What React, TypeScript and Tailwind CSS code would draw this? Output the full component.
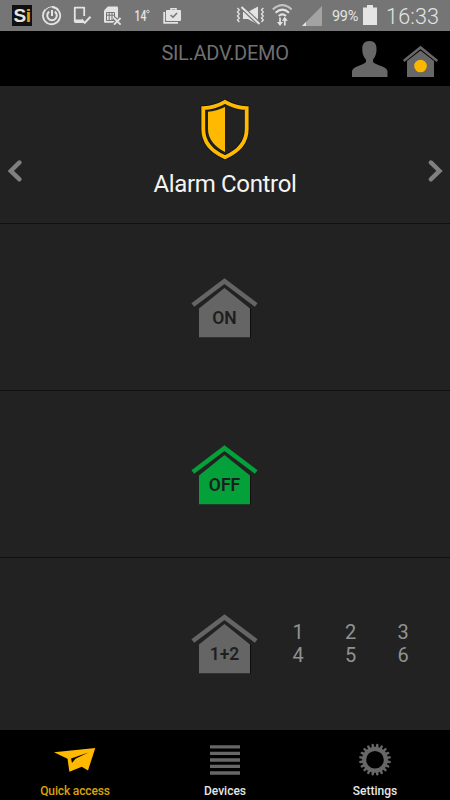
import React from 'react';

interface HouseProps {
  label: string;
  active?: boolean;
}

interface TabProps {
  label: string;
  active?: boolean;
  children: React.ReactNode;
}

const ZONES = ['1', '2', '3', '4', '5', '6'];
const TEETH = Array.from({ length: 20 }, (_, i) => i * 18);

const StatusBar = () => (
  <div className="flex h-8 w-full shrink-0 items-start border-b border-black bg-[#757575] text-[#e4e4e4]">
    <div className="ml-3 mt-[5px] flex h-[21px] w-5 shrink-0 items-center justify-center bg-[#111] font-['Liberation_Sans',sans-serif] text-[19px] leading-none font-bold tracking-[-0.5px]">
      S<span className="text-[#e0a51e]">i</span>
    </div>
    <svg className="ml-[10px] h-8 w-5 shrink-0" viewBox="42 0 20 32" fill="none" stroke="currentColor">
      <path d="M45.6 9.4A8.6 8.6 0 1 0 52 7" strokeWidth="1.8" />
      <path d="M46 9.3A8.6 8.6 0 0 1 58 9.2" strokeWidth="1.1" />
      <path d="M49.2 11.6A4.8 4.8 0 1 0 54.8 11.6" strokeWidth="2" />
      <path d="M52 10v6" strokeWidth="2" />
    </svg>
    <svg className="ml-[11px] h-8 w-5 shrink-0" viewBox="73 0 20 32" fill="none" stroke="currentColor">
      <path d="M84.2 16V7.6H74.8V21.5H82" strokeWidth="1.8" strokeLinejoin="round" />
      <path d="M74 19.500h7l3 3.500H75z" fill="currentColor" stroke="none" />
      <path d="M81.5 19.5l3.2 3.4 5.8-6.2" strokeWidth="2" />
    </svg>
    <svg className="ml-[10px] h-8 w-5 shrink-0" viewBox="103 0 20 32" fill="none">
      <path d="M107.8 6.5H117q1 0 1 1v15.2h-13q-1 0-1-1V10.4z" fill="currentColor" />
      <path d="M106.5 12.5h8v8h-8zM106.5 15.2h8M109.2 12.5v8M112 12.500v8" stroke="#757575" />
      <path d="M114 18l6.6 6.6M120.6 18l-6.6 6.6" stroke="#757575" strokeWidth="4" />
      <path d="M114 18l6.6 6.6M120.6 18l-6.6 6.6" stroke="currentColor" strokeWidth="1.8" />
    </svg>
    <svg className="ml-[10px] h-8 w-5 shrink-0" viewBox="133 0 20 32">
      <text x="134.500" y="21" textLength="11.800" lengthAdjust="spacingAndGlyphs" fontFamily="Roboto, sans-serif" fontWeight="500" fontSize="15.500" fill="currentColor">14</text>
      <circle cx="147.900" cy="11.500" r="1.300" fill="none" stroke="currentColor" strokeWidth=".9" />
    </svg>
    <svg className="ml-[9px] h-8 w-5 shrink-0" viewBox="162 0 20 32" fill="none">
      <path d="M164.2 12v10.8H178" stroke="currentColor" strokeWidth="1.8" />
      <path d="M171 11V8.800h5V11" stroke="currentColor" strokeWidth="1.6" />
      <rect x="166" y="10" width="15" height="11" rx="1" fill="currentColor" />
      <path d="M170.6 15l2.4 2.3 4-4.4" stroke="#757575" strokeWidth="1.5" />
    </svg>
    <svg className="ml-[53px] h-8 w-[31px] shrink-0" viewBox="235 0 31 32" fill="none">
      <path d="M237.5 8l1.8 2-1.8 2 1.8 2-1.8 2 1.8 2-1.8 2 1.8 2M263.3 8l-1.8 2 1.8 2-1.8 2 1.8 2-1.8 2 1.8 2-1.8 2" stroke="currentColor" strokeWidth="1.3" />
      <path d="M243 12h5l10-5.500v18l-10-5.500h-5z" fill="currentColor" />
      <path d="M241.5 7l18 17" stroke="#757575" strokeWidth="4.4" />
      <path d="M241.5 7l18 17" stroke="currentColor" strokeWidth="2" />
    </svg>
    <svg className="ml-[6px] h-8 w-[22px] shrink-0" viewBox="272 0 22 32" fill="none" stroke="currentColor">
      <path d="M272.800 9.500Q282.300 .8 291.700 9.500" strokeWidth="2" opacity=".7" />
      <path d="M275.600 12.700Q282.300 6.500 289 12.700" strokeWidth="2" />
      <path d="M278.700 16Q282.300 12.800 286 16" strokeWidth="2" />
      <path d="M280 17.500v6M284.800 25.500v-6" strokeWidth="1.7" />
      <path d="M277 22h6l-3 4zM281.800 20.800h6l-3-4z" fill="currentColor" stroke="none" />
    </svg>
    <svg className="ml-[8px] h-8 w-5 shrink-0" viewBox="302 0 20 32">
      <path d="M322 6v20h-20z" fill="#a3a3a3" />
      <path d="M306 22v4h-4z" fill="#e4e4e4" />
    </svg>
    <span className="ml-[10px] mt-2 w-[28px] shrink-0 text-[14.5px] leading-[18px] tracking-[-0.3px]">99%</span>
    <svg className="ml-[3px] h-8 w-[14px] shrink-0" viewBox="363 0 14 32">
      <path d="M363 7.500h4V5h6v2.500h4V25h-14z" fill="currentColor" />
    </svg>
    <span className="ml-[9px] mt-[5px] text-[21.5px] leading-6 font-light tracking-[0.2px]">16:33</span>
  </div>
);

const Header = () => (
  <header className="flex h-[54px] shrink-0 items-start bg-black text-[#676767]">
    <h1 className="ml-[160px] mt-[9px] w-[130px] text-center text-[20px] leading-6 tracking-[-0.3px] whitespace-nowrap text-[#707070]">SIL.ADV.DEMO</h1>
    <svg className="ml-[61px] h-[54px] w-[37px] shrink-0" viewBox="351 32 37 54">
      <path d="M369.500 41c5 0 7.300 3 7 8.500 0 5.500-2 8-3.500 10.200V62c2 3.200 14.500 4 14.500 9.500V77H352v-5.500c0-5.500 12.200-6.300 14-9.500v-2.300c-1.700-2.200-3.700-4.700-3.700-10.200C362 44 364.500 41 369.500 41z" fill="currentColor" />
    </svg>
    <svg className="ml-[14px] h-[54px] w-[37px] shrink-0" viewBox="402 32 37 54">
      <path d="M420.500 50.500L434 61V77h-27V61z" fill="currentColor" />
      <path d="M403.700 61L420.500 47.500 437.300 61" fill="none" stroke="currentColor" strokeWidth="2.6" />
      <circle cx="420.500" cy="66" r="6.300" fill="#fab700" />
    </svg>
  </header>
);

const House: React.FC<HouseProps> = ({ label, active }) => (
  <button className={active ? 'text-[#04a03a]' : 'text-[#656565]'}>
    <svg className="block h-[62px] w-[68px]" viewBox="0 0 68 62">
      <path d="M59.500 30.500V59.500" fill="none" stroke="#0c0c0c" strokeWidth="1" />
      <path d="M33.500 10L59 30.500v28.800H8V30.500z" fill="currentColor" />
      <path d="M1.800 27L33.500 3.200 65.200 27" fill="none" stroke="currentColor" strokeWidth="4.6" />
      <text x="33.500" y="46" textAnchor="middle" fontFamily="Roboto, sans-serif" fontWeight="600" fontSize="17.5" fill="#1e1e1e">{label}</text>
    </svg>
  </button>
);

const Tab: React.FC<TabProps> = ({ label, active, children }) => (
  <button className={`flex flex-col items-center text-[12px] font-medium ${active ? 'tracking-[-0.15px] text-[#dba30a]' : 'tracking-normal text-[#e6e6e6]'}`}>
    <div className="flex h-[53px] w-full justify-center">{children}</div>
    <span className="leading-4">{label}</span>
  </button>
);

const App = () => (
  <div className="flex h-[800px] w-[450px] flex-col overflow-hidden bg-[#222] font-[Roboto,sans-serif]">
    <StatusBar />
    <Header />

    <section className="flex h-[138px] shrink-0 border-b border-[#101010]">
      <button className="w-10 text-[#808080]">
        <svg className="h-full w-10" viewBox="0 86 40 138">
          <path d="M19.500 163l-8.800 8.500 8.800 8.500" fill="none" stroke="currentColor" strokeWidth="4.4" strokeLinecap="round" />
        </svg>
      </button>
      <div className="flex flex-1 flex-col items-center">
        <svg className="mt-[13px] h-[62px] w-[52px]" viewBox="199 99 52 62">
          <path d="M225 101.800c7 4 14 6 21.700 6.300V129c0 13-8.500 22.500-21.700 28.200-13.200-5.700-21.700-15.200-21.700-28.200v-20.900c7.700-.3 14.700-2.300 21.700-6.300z" fill="none" stroke="#0e1320" strokeWidth="5.600" />
          <path d="M225 101.800c7 4 14 6 21.700 6.300V129c0 13-8.500 22.500-21.700 28.200-13.200-5.700-21.700-15.200-21.700-28.200v-20.900c7.700-.3 14.700-2.300 21.700-6.300z" fill="none" stroke="#ffb900" strokeWidth="3.800" />
          <path d="M225 107v45c-9.800-5-17-12.500-17-23v-17.300c6-.4 11.500-2 17-4.700z" fill="#ffb900" />
        </svg>
        <h2 className="mt-[7px] text-[24px] leading-8 tracking-[-0.35px] text-[#f4f4f4]">Alarm Control</h2>
      </div>
      <button className="w-10 text-[#808080]">
        <svg className="h-full w-10" viewBox="410 86 40 138">
          <path d="M430.800 163l8.800 8.500-8.800 8.500" fill="none" stroke="currentColor" strokeWidth="4.4" strokeLinecap="round" />
        </svg>
      </button>
    </section>

    <section className="flex h-[167px] shrink-0 items-start justify-center border-b border-[#101010] pt-[54px]">
      <House label="ON" />
    </section>
    <section className="flex h-[167px] shrink-0 items-start justify-center border-b border-[#101010] pt-[54px]">
      <House label="OFF" active />
    </section>
    <section className="flex h-[172px] shrink-0 items-start pt-14 pl-[191px]">
      <House label="1+2" />
      <div className="ml-[13px] mt-[7px] grid grid-cols-[52px_53px_52px] text-center text-[20px] leading-[23px] text-[#929292]">
        {ZONES.map((zone) => (
          <span key={zone}>{zone}</span>
        ))}
      </div>
    </section>

    <nav className="grid h-[70px] shrink-0 grid-cols-3 bg-black">
      <Tab label="Quick access" active>
        <svg className="h-[53px] w-[44px]" viewBox="53 730 44 53">
          <path d="M54 752.300L95.300 748l-7.300 22.500-6.200-3.700-12.400 5-1.900-13z" fill="#ffb900" />
          <path d="M88.500 752.500L71 758.500l1 4.500 3.500-4.300z" fill="#080808" />
        </svg>
      </Tab>
      <Tab label="Devices">
        <svg className="h-[53px] w-[30px]" viewBox="0 0 30 53">
          <path d="M0 16.800h30M0 23.400h30M0 30h30M0 36.400h30M0 43h30" stroke="#676767" strokeWidth="3.3" />
        </svg>
      </Tab>
      <Tab label="Settings">
        <svg className="h-[53px] w-8" viewBox="0 3.300 32 53" fill="none" stroke="#676767">
          <circle cx="16" cy="33" r="10.900" strokeWidth="4.2" />
          {TEETH.map((angle) => (
            <path key={angle} d="M16 21.500v-3.300" strokeWidth="2.5" strokeLinecap="round" transform={`rotate(${angle + 9} 16 33)`} />
          ))}
        </svg>
      </Tab>
    </nav>
  </div>
);

export default App;
